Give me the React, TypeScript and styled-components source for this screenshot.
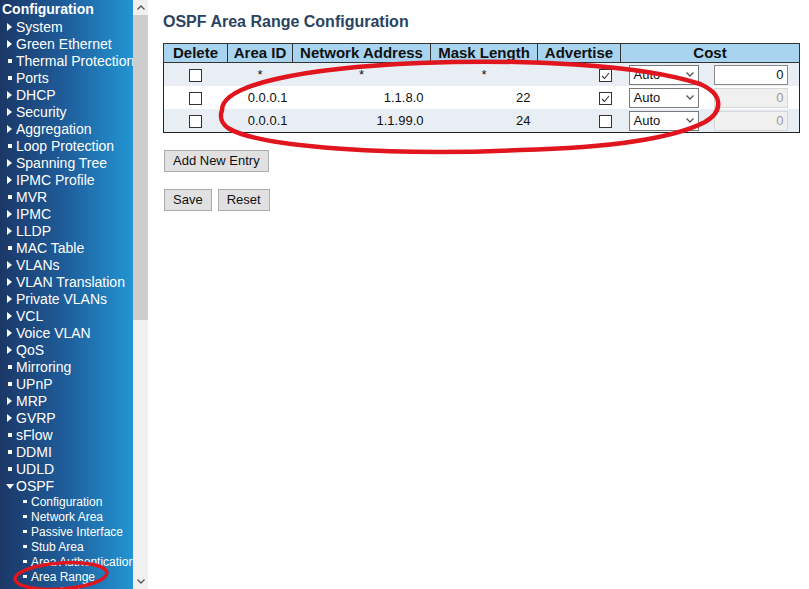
import React from 'react';
import styled, {createGlobalStyle, css} from 'styled-components';

type MarkerKind = 'arrow' | 'down' | 'bullet' | 'dot';

const menu: {label: string; kind: MarkerKind}[] = [
	{label: 'System', kind: 'arrow'},
	{label: 'Green Ethernet', kind: 'arrow'},
	{label: 'Thermal Protection', kind: 'bullet'},
	{label: 'Ports', kind: 'bullet'},
	{label: 'DHCP', kind: 'arrow'},
	{label: 'Security', kind: 'arrow'},
	{label: 'Aggregation', kind: 'arrow'},
	{label: 'Loop Protection', kind: 'bullet'},
	{label: 'Spanning Tree', kind: 'arrow'},
	{label: 'IPMC Profile', kind: 'arrow'},
	{label: 'MVR', kind: 'bullet'},
	{label: 'IPMC', kind: 'arrow'},
	{label: 'LLDP', kind: 'arrow'},
	{label: 'MAC Table', kind: 'bullet'},
	{label: 'VLANs', kind: 'arrow'},
	{label: 'VLAN Translation', kind: 'arrow'},
	{label: 'Private VLANs', kind: 'arrow'},
	{label: 'VCL', kind: 'arrow'},
	{label: 'Voice VLAN', kind: 'arrow'},
	{label: 'QoS', kind: 'arrow'},
	{label: 'Mirroring', kind: 'bullet'},
	{label: 'UPnP', kind: 'bullet'},
	{label: 'MRP', kind: 'arrow'},
	{label: 'GVRP', kind: 'arrow'},
	{label: 'sFlow', kind: 'bullet'},
	{label: 'DDMI', kind: 'bullet'},
	{label: 'UDLD', kind: 'bullet'},
	{label: 'OSPF', kind: 'down'},
];

const ospfItems = [
	'Configuration',
	'Network Area',
	'Passive Interface',
	'Stub Area',
	'Area Authentication',
	'Area Range',
	'Area Distance',
];

const rows = [
	{area: '*', network: '*', mask: '*', advertise: true, editable: true},
	{area: '0.0.0.1', network: '1.1.8.0', mask: '22', advertise: true, editable: false},
	{area: '0.0.0.1', network: '1.1.99.0', mask: '24', advertise: false, editable: false},
];

const GlobalStyle = createGlobalStyle`
	body {
		margin: 0;
		background: #fff;
		font-family: "Liberation Sans", Arial, sans-serif;
	}
`;

const Page = styled.div`
	position: relative;
	display: flex;
	width: 809px;
	height: 589px;
	overflow: hidden;
	background: #fff;
`;

const NavFrame = styled.div`
	display: flex;
	flex: none;
	width: 148px;
	height: 100%;
`;

const NavMenu = styled.nav`
	width: 133px;
	height: 100%;
	overflow: hidden;
	white-space: nowrap;
	color: #fff;
	background: linear-gradient(to right, #1b3766 0%, #1f5e9c 50%, #2295d3 100%);
`;

const NavTitle = styled.div`
	padding: 1px 0 0 2px;
	font-size: 14px;
	font-weight: bold;
	line-height: 17px;
`;

const NavItem = styled.div<{$sub?: boolean}>`
	display: flex;
	align-items: center;
	height: ${p => (p.$sub ? 15 : 17)}px;
	font-size: ${p => (p.$sub ? 12 : 14)}px;
	padding-left: ${p => (p.$sub ? 23 : 0)}px;
`;

const Marker = styled.span<{$kind: MarkerKind}>`
	flex: none;
	display: block;
	${p =>
		p.$kind === 'arrow' &&
		css`
			margin: 0 4px 0 7px;
			border-left: 5px solid #fff;
			border-top: 4.5px solid transparent;
			border-bottom: 4.5px solid transparent;
		`}
	${p =>
		p.$kind === 'down' &&
		css`
			margin: 1px 2px 0 6px;
			border-top: 5px solid #fff;
			border-left: 4px solid transparent;
			border-right: 4px solid transparent;
		`}
	${p =>
		p.$kind === 'bullet' &&
		css`
			margin: 0 4px 0 8px;
			width: 4px;
			height: 4px;
			background: #fff;
		`}
	${p =>
		p.$kind === 'dot' &&
		css`
			margin: 0 4px 0 0;
			width: 4px;
			height: 3px;
			background: #fff;
		`}
`;

const ScrollTrack = styled.div`
	display: flex;
	flex-direction: column;
	width: 15px;
	height: 100%;
	background: #f0f0f0;
`;

const ScrollArrow = styled.div`
	display: flex;
	align-items: center;
	justify-content: center;
	height: 15px;
	flex: none;
`;

const ScrollThumb = styled.div`
	height: 305px;
	flex: none;
	background: #cdcdcd;
`;

const ScrollRest = styled.div`
	flex: 1;
`;

const Main = styled.main`
	flex: 1;
	padding: 12px 10px 0 15px;
	color: #000;
`;

const Title = styled.h1`
	margin: 0 0 12px;
	font-size: 16px;
	line-height: 19px;
	font-weight: bold;
	color: #2a4361;
`;

const Table = styled.table`
	width: 637px;
	border-collapse: collapse;
	border: 1px solid #222;
	table-layout: fixed;
`;

const Th = styled.th<{$w?: number}>`
	width: ${p => (p.$w ? `${p.$w}px` : 'auto')};
	height: 18px;
	padding: 0;
	font-size: 15px;
	line-height: 18px;
	font-weight: bold;
	text-align: center;
	color: #111;
	background: #a8d4ef;
	border: 1px solid #333;
`;

const Tr = styled.tr<{$alt?: boolean}>`
	background: ${p => (p.$alt ? '#e8eef4' : '#fff')};
`;

const Td = styled.td<{$align?: 'left' | 'center' | 'right'; $pad?: number}>`
	height: 23px;
	padding: 0 ${p => p.$pad ?? 6}px 0 0;
	font-size: 13px;
	color: #111;
	text-align: ${p => p.$align ?? 'right'};
	vertical-align: middle;
`;

const CostCell = styled.div`
	display: flex;
	align-items: center;
	gap: 15px;
	padding-left: 8px;
`;

const CheckBox = styled.span`
	display: inline-flex;
	align-items: center;
	justify-content: center;
	width: 11px;
	height: 11px;
	border: 1px solid #333;
	background: #fff;
	vertical-align: middle;
`;

const FakeSelect = styled.div`
	display: flex;
	align-items: center;
	justify-content: space-between;
	box-sizing: border-box;
	width: 70px;
	height: 20px;
	padding: 0 4px 0 4px;
	border: 1px solid #7a7a7a;
	background: #fff;
	font-size: 13px;
	color: #111;
`;

const CostInput = styled.div<{$disabled?: boolean}>`
	box-sizing: border-box;
	width: 74px;
	height: 20px;
	padding-right: 3px;
	border: 1px solid ${p => (p.$disabled ? '#d6d6d6' : '#8a8a8a')};
	background: ${p => (p.$disabled ? '#f0f0f0' : '#fff')};
	color: ${p => (p.$disabled ? '#9a9a9a' : '#111')};
	font-size: 13px;
	line-height: 18px;
	text-align: right;
`;

const ButtonRow = styled.div`
	display: flex;
	gap: 6px;
	margin-top: 17px;
	padding-left: 1px;
`;

const Button = styled.button`
	height: 22px;
	padding: 0 8px;
	border: 1px solid #adadad;
	background: #e1e1e1;
	color: #111;
	font-family: "Liberation Sans", Arial, sans-serif;
	font-size: 13px;
	line-height: 20px;
	border-radius: 0;
`;

const Annotation = styled.svg`
	position: absolute;
	left: 0;
	top: 0;
	pointer-events: none;
`;

const Chevron = ({down}: {down?: boolean}) => (
	<svg width="8" height="5" viewBox="0 0 8 5">
		<path
			d={down ? 'M0.5 0.5 L4 4 L7.5 0.5' : 'M0.5 4.5 L4 1 L7.5 4.5'}
			fill="none"
			stroke="#555"
			strokeWidth="1.3"
		/>
	</svg>
);

const Check = ({on}: {on: boolean}) => (
	<CheckBox>
		{on && (
			<svg width="9" height="8" viewBox="0 0 9 8">
				<path d="M1 4 L3.5 6.5 L8 1" fill="none" stroke="#333" strokeWidth="1.1" />
			</svg>
		)}
	</CheckBox>
);

const App = () => (
	<Page>
		<GlobalStyle />
		<NavFrame>
			<NavMenu>
				<NavTitle>Configuration</NavTitle>
				{menu.map(item => (
					<NavItem key={item.label}>
						<Marker $kind={item.kind} />
						{item.label}
					</NavItem>
				))}
				{ospfItems.map(label => (
					<NavItem $sub key={label}>
						<Marker $kind="dot" />
						{label}
					</NavItem>
				))}
			</NavMenu>
			<ScrollTrack>
				<ScrollArrow>
					<Chevron />
				</ScrollArrow>
				<ScrollThumb />
				<ScrollRest />
				<ScrollArrow>
					<Chevron down />
				</ScrollArrow>
			</ScrollTrack>
		</NavFrame>
		<Main>
			<Title>OSPF Area Range Configuration</Title>
			<Table>
				<thead>
					<tr>
						<Th $w={63}>Delete</Th>
						<Th $w={64}>Area ID</Th>
						<Th $w={137}>Network Address</Th>
						<Th $w={106}>Mask Length</Th>
						<Th $w={82}>Advertise</Th>
						<Th>Cost</Th>
					</tr>
				</thead>
				<tbody>
					{rows.map((r, i) => (
						<Tr key={i} $alt={i % 2 === 0}>
							<Td $align="center" $pad={0}>
								<Check on={false} />
							</Td>
							<Td $align={r.editable ? 'center' : 'right'} $pad={r.editable ? 0 : 5}>
								{r.area}
							</Td>
							<Td $align={r.editable ? 'center' : 'right'} $pad={r.editable ? 0 : 7}>
								{r.network}
							</Td>
							<Td $align={r.editable ? 'center' : 'right'} $pad={r.editable ? 0 : 7}>
								{r.mask}
							</Td>
							<Td $pad={9}>
								<Check on={r.advertise} />
							</Td>
							<Td $align="left" $pad={0}>
								<CostCell>
									<FakeSelect>
										Auto
										<Chevron down />
									</FakeSelect>
									<CostInput $disabled={!r.editable}>0</CostInput>
								</CostCell>
							</Td>
						</Tr>
					))}
				</tbody>
			</Table>
			<ButtonRow>
				<Button>Add New Entry</Button>
			</ButtonRow>
			<ButtonRow>
				<Button>Save</Button>
				<Button>Reset</Button>
			</ButtonRow>
		</Main>
		<Annotation width="809" height="589" viewBox="0 0 809 589">
			<path
				d="M222 110 C222 85, 300 68, 420 63 C520 59, 640 64, 700 84 C725 95, 722 112, 705 122 C670 140, 600 148, 520 150 C400 156, 260 148, 228 128 C220 122, 220 116, 222 110 Z"
				fill="none"
				stroke="#e0151d"
				strokeWidth="4.5"
			/>
			<ellipse
				cx="61"
				cy="576"
				rx="46"
				ry="13"
				transform="rotate(-4 61 576)"
				fill="none"
				stroke="#e0151d"
				strokeWidth="3.5"
			/>
		</Annotation>
	</Page>
);

export default App;
